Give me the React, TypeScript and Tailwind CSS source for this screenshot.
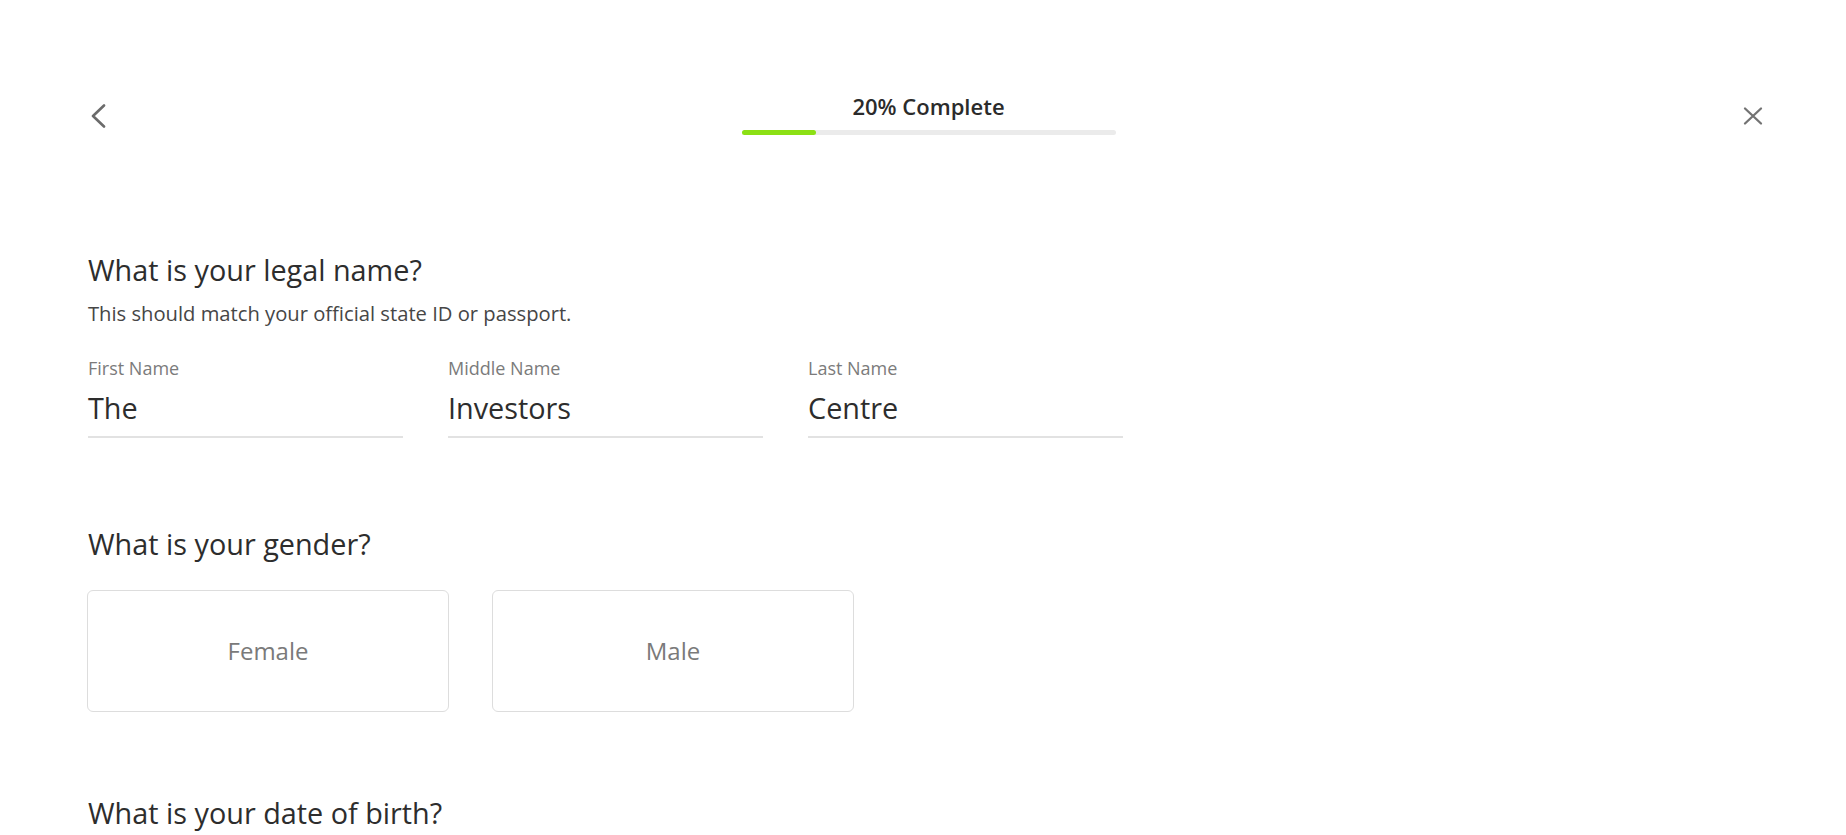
import React from "react";

const nameFields = [
  { label: "First Name", value: "The" },
  { label: "Middle Name", value: "Investors" },
  { label: "Last Name", value: "Centre" },
];

const genders = ["Female", "Male"];

const App: React.FC = () => {
  const progress = 20;

  return (
    <div className="min-h-[835px] bg-white font-['Open_Sans',sans-serif] text-[#333]">
      {/* header: back, progress, close */}
      <header className="flex items-start justify-between pt-[91px] pl-[87px] pr-[81px]">
        <button type="button" className="mt-[13px] h-6 w-6 text-[#6b6b6b]">
          <svg viewBox="0 0 24 24" className="h-6 w-6" fill="none">
            <path
              d="M17 1.5 6 12l11 10.5"
              stroke="currentColor"
              strokeWidth="2.6"
              strokeLinecap="round"
              strokeLinejoin="round"
            />
          </svg>
        </button>

        <div className="ml-[5px] flex w-[374px] flex-col">
          <p className="text-center text-[22px] font-semibold leading-[30px] text-[#2b2b2b]">
            {progress}% Complete
          </p>
          <div className="mt-[9px] h-[5px] w-full rounded-full bg-[#ebebeb]">
            <div
              className="h-full rounded-full bg-[#8ce014]"
              style={{ width: `${progress}%` }}
            />
          </div>
        </div>

        <button type="button" className="mt-[13px] h-6 w-6 text-[#737373]">
          <svg viewBox="0 0 24 24" className="h-6 w-6" fill="none">
            <path
              d="M4 4.5 20 19.5M20 4.5 4 19.5"
              stroke="currentColor"
              strokeWidth="2.3"
              strokeLinecap="round"
            />
          </svg>
        </button>
      </header>

      <main className="pl-[88px]">
        <section className="mt-[115px]">
          <h2 className="text-[28.8px] leading-[40px] text-[#2d2d2d]">
            What is your legal name?
          </h2>
          <p className="mt-[10px] text-[20.2px] leading-[26px] text-[#464646]">
            This should match your official state ID or passport.
          </p>
          <div className="mt-[30px] grid w-[1035px] grid-cols-3 gap-x-[45px]">
            {nameFields.map((field) => (
              <label key={field.label} className="flex flex-col">
                <span className="text-[18px] leading-[24px] text-[#7b7b7b]">
                  {field.label}
                </span>
                <span className="mt-[8px] border-b-2 border-[#e2e2e2] pb-[8px] text-[28.8px] leading-[40px] text-[#2d2d2d]">
                  {field.value}
                </span>
              </label>
            ))}
          </div>
        </section>

        <section className="mt-[86px]">
          <h2 className="text-[28.8px] leading-[40px] text-[#2d2d2d]">
            What is your gender?
          </h2>
          <div className="mt-[26px] -ml-px flex gap-[43px]">
            {genders.map((g) => (
              <button
                key={g}
                type="button"
                className="flex h-[122px] w-[362px] items-center justify-center rounded-md border border-[#dddddd] bg-white text-[24px] text-[#7a7a7a]"
              >
                {g}
              </button>
            ))}
          </div>
        </section>

        <section className="mt-[81px]">
          <h2 className="text-[28.8px] leading-[40px] text-[#2d2d2d]">
            What is your date of birth?
          </h2>
        </section>
      </main>
    </div>
  );
};

export default App;
